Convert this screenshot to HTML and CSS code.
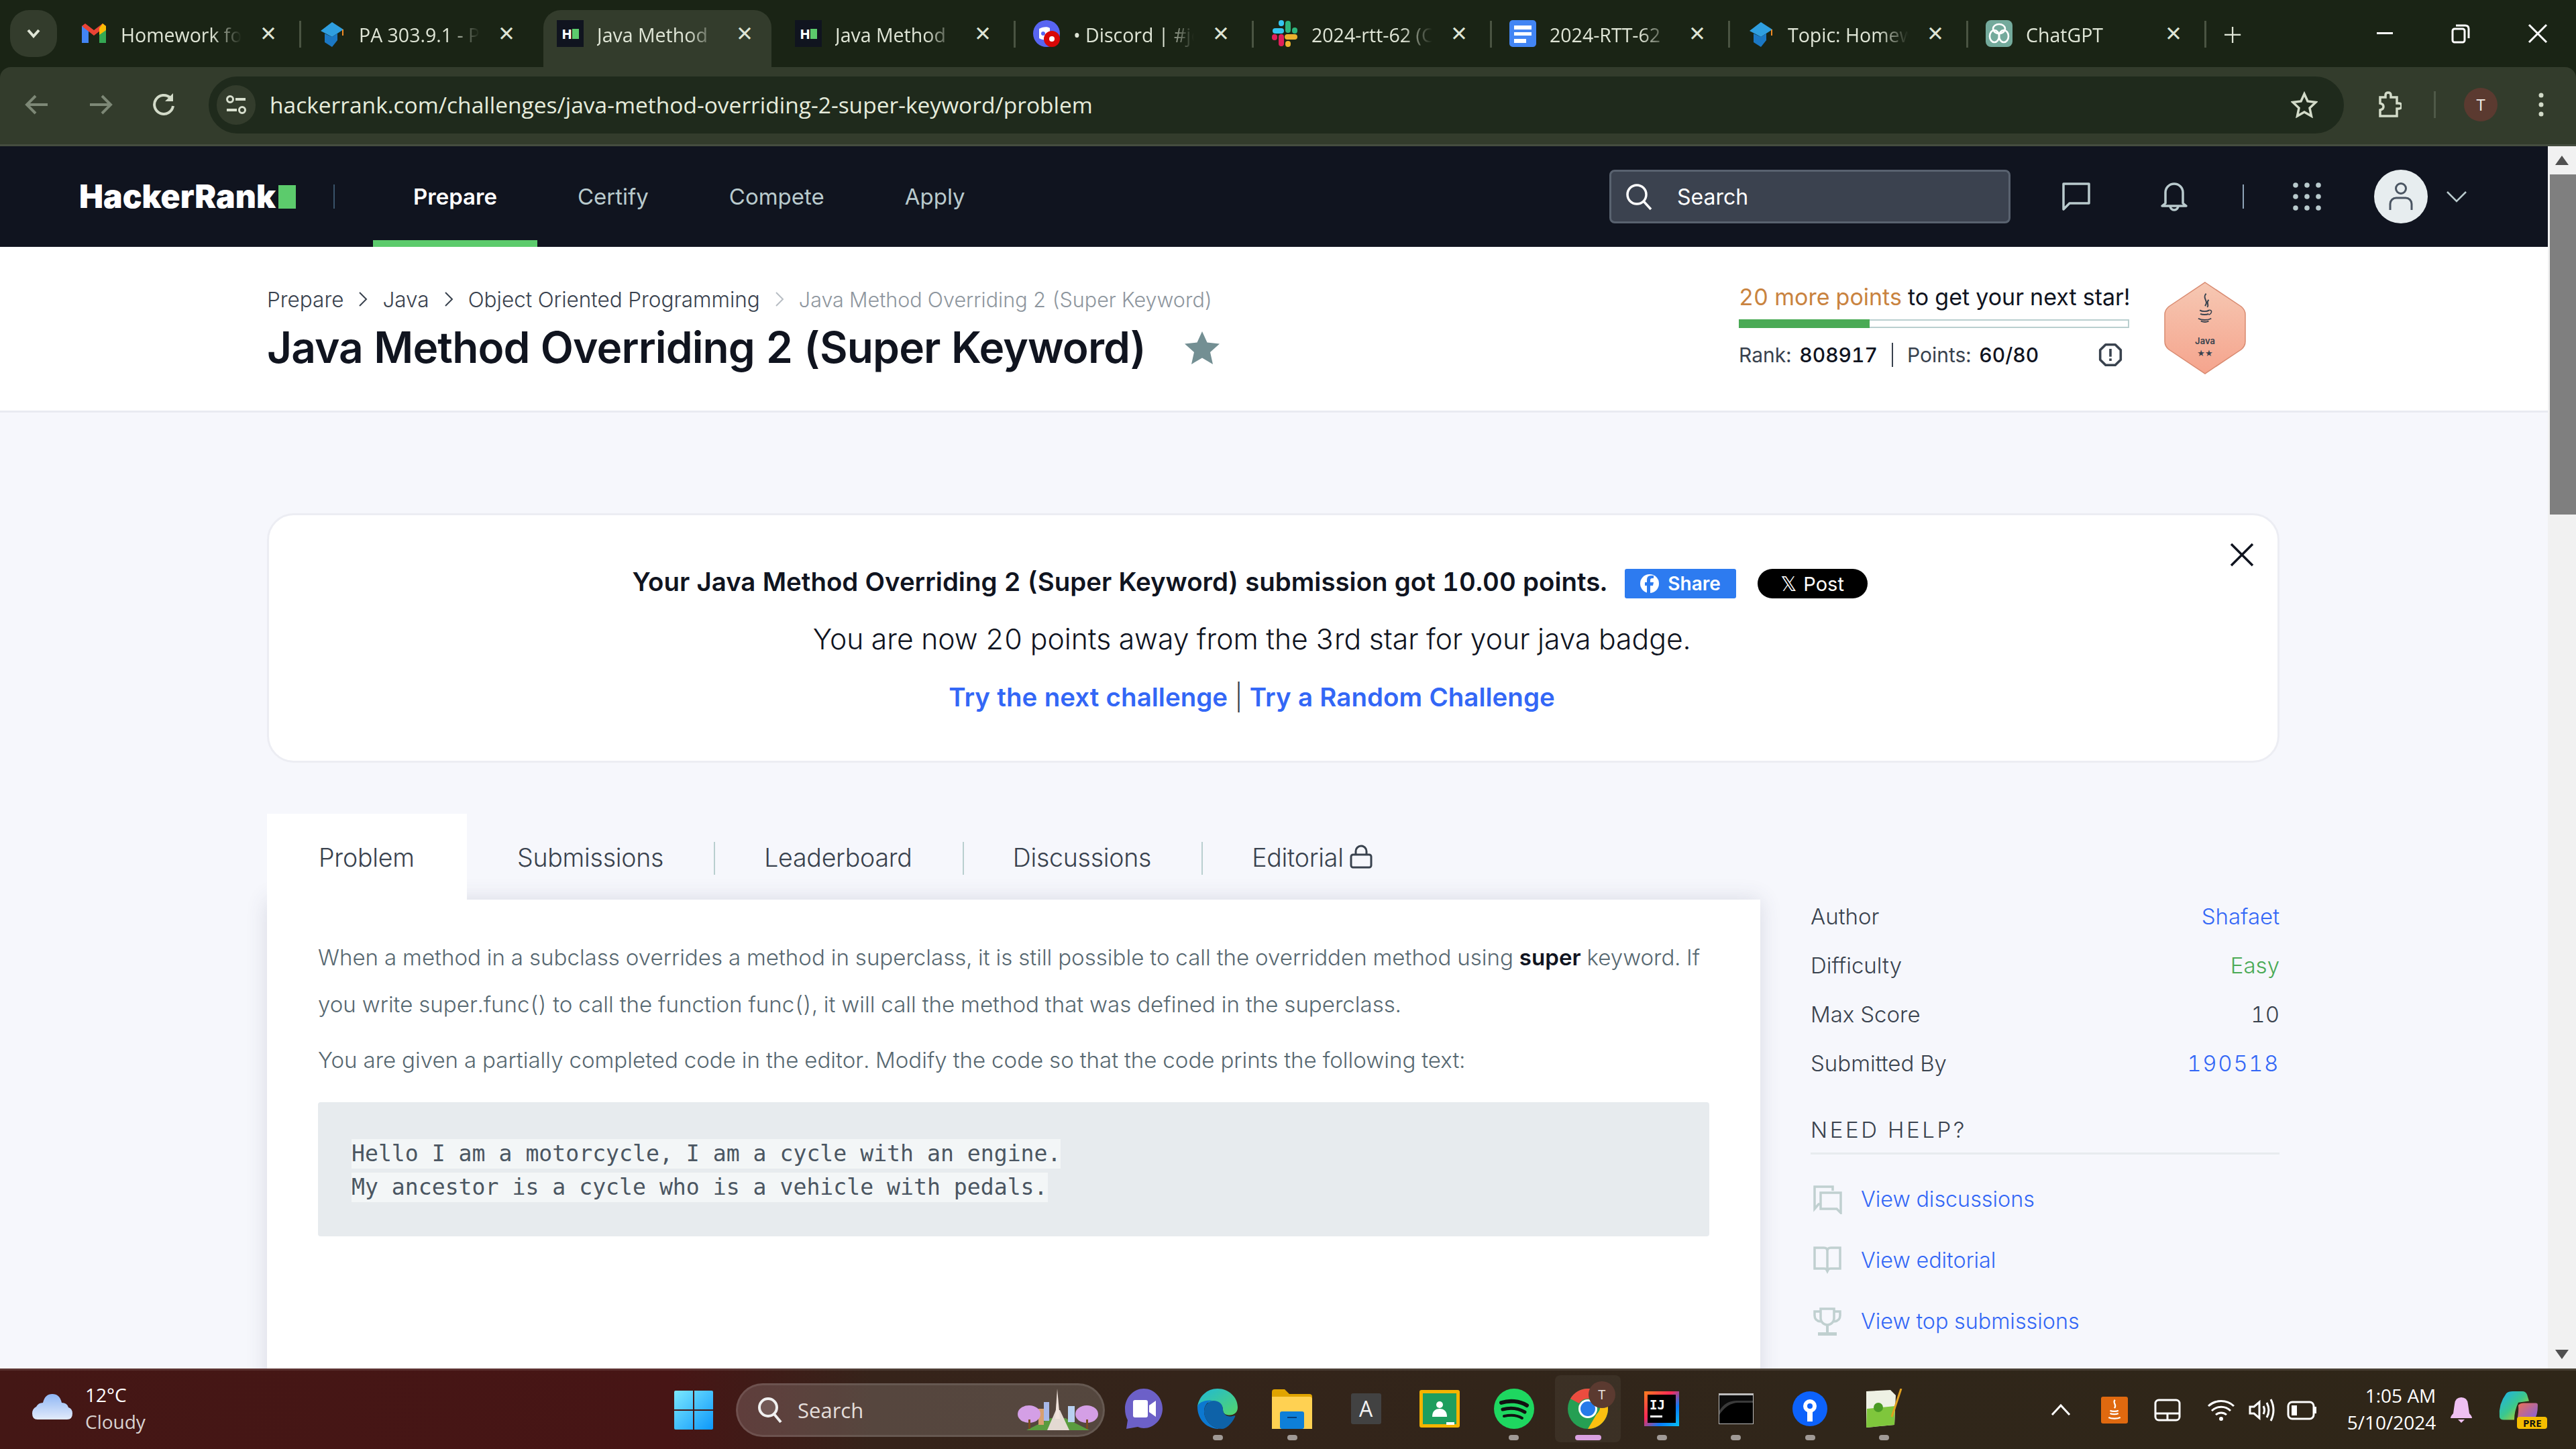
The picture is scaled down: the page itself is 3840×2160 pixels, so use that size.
FILE: index.html
```html
<!DOCTYPE html>
<html lang="en">
<head>
<meta charset="utf-8">
<title>Java Method Overriding 2 (Super Keyword) | HackerRank</title>
<link rel="stylesheet" href="styles.css">
</head>
<body>
<div class="tabstrip">
  <div class="tab-list-btn"><svg width="24" height="16" viewBox="0 0 24 16"><path d="M4 3l8 9 8-9" fill="none" stroke="#dfe5d6" stroke-width="4"/></svg></div>
  <div class="tab">
    <svg class="fav" viewBox="0 0 40 40"><path d="M2 34V9l5-3 5 6v22z" fill="#4285f4"/><path d="M28 34V12l5-6 5 3v25z" fill="#34a853"/><path d="M2 9l18 14L38 9l-5-4-13 10L7 5z" fill="#ea4335"/><path d="M33 5l5 4v6l-10 7v-10z" fill="#fbbc04"/></svg>
    <span class="tab-title">Homework fo</span><span class="tab-x">✕</span>
  </div>
  <div class="tab">
    <svg class="fav" viewBox="0 0 40 40"><path d="M3 16L20 3l17 11-17 11z" fill="#2f9fe0"/><path d="M9 20v13l11 7 8-10V20l-8 5z" fill="#1b78c4"/><path d="M35 14l2 0v9h-2z" fill="#f08a24"/></svg>
    <span class="tab-title">PA 303.9.1 - P</span><span class="tab-x">✕</span>
  </div>
  <div class="tab active">
    <svg class="fav" viewBox="0 0 40 40"><rect width="40" height="40" fill="#10141f"/><rect x="23" y="13" width="10" height="15" fill="#5ccb6c"/><text x="15" y="27.500" text-anchor="middle" class="fav-h">H</text></svg>
    <span class="tab-title">Java Method</span><span class="tab-x">✕</span>
  </div>
  <div class="tab">
    <svg class="fav" viewBox="0 0 40 40"><rect width="40" height="40" fill="#10141f"/><rect x="23" y="13" width="10" height="15" fill="#5ccb6c"/><text x="15" y="27.500" text-anchor="middle" class="fav-h">H</text></svg>
    <span class="tab-title">Java Method</span><span class="tab-x">✕</span>
  </div>
  <div class="tab">
    <svg class="fav" viewBox="0 0 40 40"><circle cx="20" cy="20" r="20" fill="#5865f2"/><path d="M9 13c4-3 13-4 16-1v16c-4 2-12 2-16-1z" fill="#fff"/><circle cx="15" cy="20" r="3" fill="#5865f2"/><circle cx="28" cy="28" r="12" fill="#d80707"/><circle cx="28" cy="28" r="4" fill="#fff"/></svg>
    <span class="tab-title">• Discord | #jo</span><span class="tab-x">✕</span>
  </div>
  <div class="tab">
    <svg class="fav" viewBox="0 0 40 40"><g fill="none" stroke-width="8" stroke-linecap="round"><path d="M6 16h9" stroke="#36c5f0"/><path d="M25 5v10" stroke="#2eb67d"/><path d="M24 25h11" stroke="#ecb22e"/><path d="M15 25v10" stroke="#e01e5a"/></g><rect x="11" y="0" width="8" height="9" rx="4" fill="#36c5f0"/><rect x="31" y="11" width="8" height="9" rx="4" fill="#2eb67d"/><rect x="21" y="31" width="8" height="9" rx="4" fill="#ecb22e"/><rect x="1" y="21" width="8" height="9" rx="4" fill="#e01e5a"/></svg>
    <span class="tab-title">2024-rtt-62 (C</span><span class="tab-x">✕</span>
  </div>
  <div class="tab">
    <svg class="fav" viewBox="0 0 40 40"><rect width="40" height="40" rx="5" fill="#4285f4"/><rect x="7" y="8" width="26" height="6" fill="#fff"/><rect x="7" y="18" width="26" height="5" fill="#fff"/><rect x="7" y="28" width="18" height="6" fill="#fff"/></svg>
    <span class="tab-title">2024-RTT-62</span><span class="tab-x">✕</span>
  </div>
  <div class="tab">
    <svg class="fav" viewBox="0 0 40 40"><path d="M3 16L20 3l17 11-17 11z" fill="#2f9fe0"/><path d="M9 20v13l11 7 8-10V20l-8 5z" fill="#1b78c4"/><path d="M35 14l2 0v9h-2z" fill="#f08a24"/></svg>
    <span class="tab-title">Topic: Homew</span><span class="tab-x">✕</span>
  </div>
  <div class="tab">
    <svg class="fav" viewBox="0 0 40 40"><rect width="40" height="40" rx="8" fill="#74aa9c"/><g fill="none" stroke="#fff" stroke-width="2.600"><ellipse cx="20" cy="13" rx="9" ry="7"/><ellipse cx="13" cy="24" rx="7" ry="9"/><ellipse cx="27" cy="24" rx="7" ry="9"/></g></svg>
    <span class="tab-title">ChatGPT</span><span class="tab-x">✕</span>
  </div>
  <div class="new-tab">+</div>
  <div class="win-controls">
    <svg class="win-ctl" viewBox="0 0 40 40"><rect x="8" y="18" width="24" height="3" fill="#fff"/></svg>
    <svg class="win-ctl" viewBox="0 0 40 40"><rect x="9" y="13" width="18" height="20" rx="3" fill="none" stroke="#fff" stroke-width="3"/><path d="M14 8h14q5 0 5 5v14" fill="none" stroke="#fff" stroke-width="3"/></svg>
    <svg class="win-ctl" viewBox="0 0 40 40"><path d="M7 7l26 26M33 7L7 33" stroke="#fff" stroke-width="3"/></svg>
  </div>
</div>

<div class="toolbar">
  <svg class="tb-nav" viewBox="0 0 40 40"><path d="M36 20H6M18 7L5 20l13 13" fill="none" stroke="#7d8876" stroke-width="4"/></svg>
  <svg class="tb-nav" viewBox="0 0 40 40"><path d="M4 20h30M22 7l13 13-13 13" fill="none" stroke="#7d8876" stroke-width="4"/></svg>
  <svg class="tb-nav" viewBox="0 0 40 40"><path d="M33 22a14 14 0 1 1-4-12" fill="none" stroke="#d3dbc9" stroke-width="4"/><path d="M33 3v12H21z" fill="#d3dbc9"/></svg>
  <div class="omnibox">
    <div class="site-info"><svg width="32" height="32" viewBox="0 0 32 32"><circle cx="7" cy="8" r="4.500" fill="none" stroke="#d8dfce" stroke-width="3"/><rect x="15" y="6" width="15" height="4" fill="#d8dfce"/><circle cx="25" cy="24" r="4.500" fill="none" stroke="#d8dfce" stroke-width="3"/><rect x="2" y="22" width="15" height="4" fill="#d8dfce"/></svg></div>
    <span class="url">hackerrank.com/challenges/java-method-overriding-2-super-keyword/problem</span>
    <svg class="omni-star" viewBox="0 0 40 40"><path d="M20 4l5 11 12 1.500-9 8.500 2.500 12L20 31 9.500 37 12 25l-9-8.500L15 15z" fill="none" stroke="#d3dbc9" stroke-width="3.500"/></svg>
  </div>
  <svg class="tb-ext" viewBox="0 0 40 40"><path d="M8 9h8V6q0-4 4-4t4 4v3h9v9h3q4 0 4 4t-4 4h-3v11H8v-9q5-1 5-5t-5-5z" fill="none" stroke="#d3dbc9" stroke-width="3.500"/></svg>
  <div class="tb-div"></div>
  <div class="tb-avatar">T</div>
  <svg class="tb-dots" viewBox="0 0 12 40"><circle cx="6" cy="6" r="3.500" fill="#d3dbc9"/><circle cx="6" cy="20" r="3.500" fill="#d3dbc9"/><circle cx="6" cy="34" r="3.500" fill="#d3dbc9"/></svg>
</div>

<div class="viewport">
  <div class="page">
    <nav class="nav">
      <div class="logo"><span class="logo-text">HackerRank</span><span class="logo-block"></span></div>
      <div class="nav-sep"></div>
      <div class="nav-link current">Prepare</div>
      <div class="nav-link">Certify</div>
      <div class="nav-link">Compete</div>
      <div class="nav-link">Apply</div>
      <div class="nav-right">
        <div class="nav-search">
          <svg width="44" height="44" viewBox="0 0 44 44"><circle cx="19" cy="19" r="14" fill="none" stroke="#fff" stroke-width="3.500"/><path d="M29 29l11 12" stroke="#fff" stroke-width="3.500"/></svg>
          <span>Search</span>
        </div>
        <svg class="nav-ico chat" viewBox="0 0 44 44"><path d="M3 3h38v29H12L3 41z" fill="none" stroke="#b9cacd" stroke-width="3.500" stroke-linejoin="round"/></svg>
        <svg class="nav-ico bell" viewBox="0 0 44 44"><path d="M9 32V16a13 13 0 0 1 26 0v16l5 4H4z" fill="none" stroke="#b9cacd" stroke-width="3.500" stroke-linejoin="round"/><path d="M16 36a6 6 0 0 0 12 0" fill="none" stroke="#b9cacd" stroke-width="3.500"/></svg>
        <div class="nav-sep2"></div>
        <svg class="nav-ico grid" viewBox="0 0 44 44"><g fill="#b9cacd"><circle cx="5" cy="5" r="3.800"/><circle cx="22" cy="5" r="3.800"/><circle cx="39" cy="5" r="3.800"/><circle cx="5" cy="22" r="3.800"/><circle cx="22" cy="22" r="3.800"/><circle cx="39" cy="22" r="3.800"/><circle cx="5" cy="39" r="3.800"/><circle cx="22" cy="39" r="3.800"/><circle cx="39" cy="39" r="3.800"/></g></svg>
        <div class="nav-avatar"><svg width="40" height="44" viewBox="0 0 40 44"><circle cx="20" cy="10" r="7.500" fill="none" stroke="#4a5562" stroke-width="3"/><path d="M4 42V33a9 9 0 0 1 9-9h14a9 9 0 0 1 9 9v9" fill="none" stroke="#4a5562" stroke-width="3"/></svg></div>
        <svg class="nav-chev" viewBox="0 0 32 20"><path d="M2 3l14 14L30 3" fill="none" stroke="#b9cacd" stroke-width="2.500"/></svg>
      </div>
    </nav>

    <header class="head">
      <div class="head-left">
        <div class="crumbs">
          <span>Prepare</span><svg class="crumb-sep" viewBox="0 0 14 24"><path d="M2 2l10 10L2 22" fill="none" stroke="#39424e" stroke-width="2"/></svg>
          <span>Java</span><svg class="crumb-sep" viewBox="0 0 14 24"><path d="M2 2l10 10L2 22" fill="none" stroke="#39424e" stroke-width="2"/></svg>
          <span>Object Oriented Programming</span><svg class="crumb-sep" viewBox="0 0 14 24"><path d="M2 2l10 10L2 22" fill="none" stroke="#b8bec4" stroke-width="2"/></svg>
          <span class="crumb-last">Java Method Overriding 2 (Super Keyword)</span>
        </div>
        <div class="title-row">
          <h1>Java Method Overriding 2 (Super Keyword)</h1>
          <svg class="title-star" viewBox="0 0 52 50"><path d="M26 1l7.500 16.500L52 19.500 38 32l4 18-16-9.500L10 50l4-18L0 19.500l18.500-2z" fill="#738f93"/></svg>
        </div>
      </div>
      <div class="head-score">
        <div class="score">
          <div class="score-msg"><span class="orange">20 more points</span> to get your next star!</div>
          <div class="progress"><div class="progress-fill"></div></div>
          <div class="rank-row">
            <span>Rank:</span><b>808917</b><span class="rank-sep"></span><span>Points:</span><b>60/80</b>
            <svg class="rank-info" viewBox="0 0 40 40"><path d="M12 3h16l9 9v16l-9 9H12l-9-9V12z" fill="none" stroke="#39424e" stroke-width="4" stroke-linejoin="round"/><rect x="18" y="10" width="4" height="13" fill="#39424e"/><rect x="18" y="26" width="4" height="4" fill="#39424e"/></svg>
          </div>
        </div>
        <div class="badge">
          <svg class="badge-shape" viewBox="0 0 122 138"><defs><linearGradient id="bg" x1="0" y1="0" x2="0" y2="1"><stop offset="0" stop-color="#f6c8b3"/><stop offset="1" stop-color="#f5a48d"/></linearGradient></defs><path d="M61 1l54 36q6 5 6 12v40q0 7-6 12l-54 36-54-36q-6-5-6-12V49q0-7 6-12z" fill="url(#bg)" stroke="#d88a70" stroke-width="1.500"/></svg>
          <svg class="badge-cup" viewBox="0 0 30 80"><g fill="none" stroke="#39424e" stroke-width="2.500"><path d="M17 2c-8 10 6 14-2 24M22 14c-6 6 2 10-3 14"/><path d="M5 34c4 3 14 3 18 0M6 41c4 2 12 2 16 0"/><path d="M2 50c6 4 18 4 25 0"/><path d="M7 55c5 2 11 2 15 0"/></g><path d="M23 34c6-1 6 6-1 9" fill="none" stroke="#39424e" stroke-width="2"/></svg>
          <span class="badge-name">Java</span>
          <span class="badge-stars">★★</span>
        </div>
      </div>
    </header>

    <main class="main">
      <section class="banner">
        <svg class="banner-x" viewBox="0 0 36 36"><path d="M2 2l32 32M34 2L2 34" stroke="#10141f" stroke-width="3.500"/></svg>
        <div class="banner-1">
          <span>Your Java Method Overriding 2 (Super Keyword) submission got 10.00 points.</span>
          <span class="fb"><svg width="30" height="30" viewBox="0 0 30 30"><circle cx="15" cy="15" r="14" fill="#fff"/><path d="M16 29V18h4l1-5h-5v-3q0-3 3-3h2V3h-4q-6 0-6 6v4H8v5h3v11z" fill="#2d7bf0"/></svg>Share</span>
          <span class="xpost"><span class="xlogo">𝕏</span>Post</span>
        </div>
        <div class="banner-2">You are now 20 points away from the 3rd star for your java badge.</div>
        <div class="banner-3"><a>Try the next challenge</a><span class="bar"> | </span><a>Try a Random Challenge</a></div>
      </section>

      <div class="content">
        <div class="left">
          <div class="tabs">
            <div class="ptab on">Problem</div>
            <div class="ptab">Submissions</div>
            <div class="ptab sep">Leaderboard</div>
            <div class="ptab sep">Discussions</div>
            <div class="ptab sep">Editorial <svg class="lock" viewBox="0 0 34 36"><rect x="2" y="15" width="30" height="19" rx="3" fill="none" stroke="#39424e" stroke-width="3"/><path d="M9 15V10a8 8 0 0 1 16 0v5" fill="none" stroke="#39424e" stroke-width="3"/></svg></div>
          </div>
          <article class="card">
            <p class="para first">When a method in a subclass overrides a method in superclass, it is still possible to call the overridden method using <b>super</b> keyword. If you write super.func() to call the function func(), it will call the method that was defined in the superclass.</p>
            <p class="para">You are given a partially completed code in the editor. Modify the code so that the code prints the following text:</p>
            <div class="pre">
              <code>Hello I am a motorcycle, I am a cycle with an engine.</code>
              <code>My ancestor is a cycle who is a vehicle with pedals.</code>
            </div>
          </article>
        </div>
        <aside class="side">
          <div class="side-row"><span>Author</span><span class="blue">Shafaet</span></div>
          <div class="side-row"><span>Difficulty</span><span class="green">Easy</span></div>
          <div class="side-row"><span>Max Score</span><span>10</span></div>
          <div class="side-row"><span>Submitted By</span><span class="blue num">190518</span></div>
          <div class="help">NEED HELP?</div>
          <div class="help-link"><svg viewBox="0 0 44 44"><path d="M30 9V3H3v33l6-7h4" fill="none" stroke="#c0d0d0" stroke-width="3.500"/><path d="M12 12h30v30l-6-6H12z" fill="none" stroke="#c0d0d0" stroke-width="3.500"/></svg><span>View discussions</span></div>
          <div class="help-link"><svg viewBox="0 0 44 44"><path d="M3 3h14q5 0 5 5v30q0-4-5-4H3zM41 3H27q-5 0-5 5v30q0-4 5-4h14z" fill="none" stroke="#c0d0d0" stroke-width="3.500"/><path d="M18 34l4 8 4-8" fill="#c0d0d0"/></svg><span>View editorial</span></div>
          <div class="help-link"><svg viewBox="0 0 44 44"><path d="M12 3h20v14a10 10 0 0 1-20 0z" fill="none" stroke="#c0d0d0" stroke-width="3.500"/><path d="M12 7H3v6q0 8 9 9M32 7h9v6q0 8-9 9" fill="none" stroke="#c0d0d0" stroke-width="3.500"/><rect x="20" y="27" width="4" height="11" fill="#c0d0d0"/><rect x="8" y="38" width="28" height="5" fill="#c0d0d0"/></svg><span>View top submissions</span></div>
        </aside>
      </div>
    </main>
  </div>
  <div class="scrollbar">
    <div class="sb-arrow"><svg width="20" height="14" viewBox="0 0 20 14"><path d="M10 0l10 14H0z" fill="#505050"/></svg></div>
    <div class="sb-thumb"></div>
    <div class="sb-track"></div>
    <div class="sb-arrow low"><svg width="20" height="14" viewBox="0 0 20 14"><path d="M10 14L0 0h20z" fill="#505050"/></svg></div>
  </div>
</div>

<footer class="taskbar">
  <div class="weather">
    <svg class="cloud" viewBox="0 0 60 38"><defs><linearGradient id="cl" x1="0" y1="0" x2="0" y2="1"><stop offset="0" stop-color="#8fb6f4"/><stop offset="1" stop-color="#e2ebfb"/></linearGradient></defs><path d="M8 38q-8 0-8-9 0-7 6-10 3-6 10-6 3-13 14-13t14 13q8 0 10 7 6 2 6 9 0 9-8 9z" fill="url(#cl)"/></svg>
    <div class="weather-text"><div>12°C</div><div class="dim">Cloudy</div></div>
  </div>
  <svg class="winlogo" viewBox="0 0 58 58"><defs><linearGradient id="win" x1="0" y1="0" x2="1" y2="1"><stop offset="0" stop-color="#7be8ff"/><stop offset="1" stop-color="#0d98fa"/></linearGradient></defs><path d="M0 2q0-2 2-2h26v28H0zM30 0h26q2 0 2 2v26H30zM0 30h28v28H2q-2 0-2-2zM30 30h28v26q0 2-2 2H30z" fill="url(#win)"/></svg>
  <div class="tb-search">
    <svg width="40" height="42" viewBox="0 0 40 42"><circle cx="17" cy="17" r="13" fill="#ffffff22" stroke="#f0f0f0" stroke-width="4"/><path d="M26 27l10 12" stroke="#f0f0f0" stroke-width="4"/></svg>
    <span>Search</span>
    <svg class="tb-scene" viewBox="0 0 122 64"><path d="M14 62l36-18h22l36 18z" fill="#5a9b3f"/><path d="M45 62l13-30h6l14 30z" fill="#e3d9d2"/><rect x="40" y="20" width="8" height="28" fill="#a8b8e8"/><rect x="76" y="26" width="10" height="24" fill="#b8d0f0"/><rect x="32" y="30" width="8" height="24" fill="#d8a070"/><path d="M57 45L60 0l4 45z" fill="#f1e4dc"/><ellipse cx="18" cy="38" rx="17" ry="13" fill="#d49fe6"/><ellipse cx="104" cy="38" rx="17" ry="13" fill="#d49fe6"/><rect x="17" y="46" width="3" height="14" fill="#7a4b20"/><rect x="103" y="46" width="3" height="14" fill="#7a4b20"/></svg>
  </div>
  <div class="apps">
    <div class="app"><svg viewBox="0 0 56 60"><path d="M28 0c15 0 28 13 28 30 0 16-13 29-28 29-3 0-6-1-9-2l-17 3 2-13Q0 40 0 30C0 13 13 0 28 0z" fill="#6c60c8"/><rect x="12" y="17" width="22" height="26" rx="3" fill="#fff"/><path d="M36 25l10-7v24l-10-7z" fill="#fff"/></svg></div>
    <div class="app dot"><svg viewBox="0 0 60 60"><defs><linearGradient id="ed" x1="0" y1="0" x2="1" y2="1"><stop offset="0" stop-color="#1fb8d8"/><stop offset="1" stop-color="#54d66a"/></linearGradient></defs><path d="M30 0c17 0 30 13 30 28 0 9-8 13-16 11-5-1-6-5-6-8 0-6-6-11-14-11C10 20 1 27 0 27 2 12 14 0 30 0z" fill="url(#ed)"/><path d="M0 27c1-6 12-11 22-9-9 2-12 9-12 16 0 13 12 26 27 26C15 62 0 47 0 27z" fill="#0c78d0"/><path d="M10 34c0-10 8-16 14-16 8 0 14 5 14 13 0 8 8 12 14 10 4-1 5-1 4 1-5 11-14 18-19 18-15 0-27-13-27-26z" fill="#0e62a8"/></svg></div>
    <div class="app dot"><svg viewBox="0 0 60 60"><path d="M0 5q0-4 4-4h15l7 7h30q4 0 4 4v44q0 4-4 4H4q-4 0-4-4z" fill="#e0a400"/><path d="M0 12h56q4 0 4 4v44H0z" fill="#ffd152"/><rect x="12" y="34" width="36" height="26" rx="3" fill="#0e7fd8"/><rect x="23" y="42" width="14" height="2" fill="#063e7a"/></svg></div>
    <div class="app"><div class="app-a">A</div></div>
    <div class="app"><svg viewBox="0 0 60 60"><rect y="2" width="60" height="56" rx="3" fill="#f4b400"/><rect x="5" y="7" width="50" height="46" fill="#1e9e5e"/><circle cx="30" cy="24" r="5" fill="#fff"/><path d="M19 42c0-9 5-12 11-12s11 3 11 12z" fill="#fff"/><rect x="40" y="50" width="12" height="4" fill="#fff"/></svg></div>
    <div class="app dot"><svg viewBox="0 0 60 60"><circle cx="30" cy="30" r="30" fill="#1ed760"/><g fill="none" stroke="#111" stroke-linecap="round"><path d="M11 21c12-4 27-3 38 4" stroke-width="6"/><path d="M13 31c11-3 23-2 33 4" stroke-width="5"/><path d="M15 41c9-2 19-2 27 3" stroke-width="4"/></g></svg></div>
    <div class="app on"><svg viewBox="0 0 60 60"><circle cx="30" cy="30" r="30" fill="#1a9a4a"/><path d="M30 0a30 30 0 0 1 26 15H30a15 15 0 0 0-13 7L4 15A30 30 0 0 1 30 0z" fill="#ea4335"/><path d="M56 15a30 30 0 0 1-26 45l13-22a15 15 0 0 0 0-23z" fill="#fbbc04"/><circle cx="30" cy="30" r="14" fill="#fff"/><circle cx="30" cy="30" r="11" fill="#1a73e8"/></svg><span class="app-t">T</span></div>
    <div class="app dot"><svg class="s52" viewBox="0 0 52 52"><defs><linearGradient id="ij" x1="0" y1="0" x2="1" y2="1"><stop offset="0" stop-color="#fc801d"/><stop offset=".4" stop-color="#fe2857"/><stop offset=".7" stop-color="#087cfa"/><stop offset="1" stop-color="#07c3f2"/></linearGradient></defs><rect width="52" height="52" fill="url(#ij)"/><rect x="5" y="5" width="42" height="42" fill="#000"/><text x="8" y="27" class="ij">IJ</text><rect x="9" y="36" width="18" height="3" fill="#fff"/></svg></div>
    <div class="app dot"><svg class="s52" viewBox="0 0 52 46"><rect width="52" height="46" fill="#bdbdbd"/><rect x="1" y="3" width="50" height="42" fill="#0b0b0b"/><path d="M1 45V32q12-18 28-18h22v31z" fill="#000"/><path d="M1 32q12-18 28-18h22v-3H27Q10 11 1 26z" fill="#3a3a3a"/></svg></div>
    <div class="app dot"><svg class="s52" viewBox="0 0 52 52"><circle cx="26" cy="26" r="26" fill="#0c62fb"/><circle cx="26" cy="22" r="10" fill="#fff"/><circle cx="26" cy="22" r="4" fill="#0c62fb"/><rect x="22" y="26" width="8" height="19" fill="#fff"/></svg></div>
    <div class="app dot"><svg viewBox="0 0 56 60"><path d="M2 4l36-2 8 8-2 44-42 4z" fill="#eef1e4"/><path d="M3 30l42-4-1 28-42 4z" fill="#7fc63c"/><circle cx="20" cy="28" r="7" fill="#4a9a24"/><path d="M54 0L40 42" stroke="#e0a020" stroke-width="3"/></svg></div>
  </div>
  <div class="tray">
    <svg class="t80" viewBox="0 0 80 40"><path d="M27 27l13-14 13 14" fill="none" stroke="#fff" stroke-width="3"/></svg>
    <div class="t80"><div class="java-tile"><svg width="24" height="32" viewBox="0 0 28 44"><g fill="none" stroke="#fff" stroke-width="3"><path d="M15 1c-6 7 5 9-1 17"/><path d="M5 23c4 2 13 2 17 0M5 29c4 2 13 2 17 0"/><path d="M2 37c6 3 18 3 24 0"/></g></svg></div></div>
    <svg class="t78" viewBox="0 0 78 40"><rect x="21" y="5" width="36" height="30" rx="5" fill="none" stroke="#fff" stroke-width="3"/><path d="M21 25h36M39 25v10" stroke="#fff" stroke-width="3"/></svg>
    <svg class="t82" viewBox="0 0 82 40"><g fill="none" stroke="#fff" stroke-width="3"><path d="M22 14a28 28 0 0 1 38 0"/><path d="M27 21a20 20 0 0 1 28 0"/><path d="M33 27a12 12 0 0 1 16 0"/></g><circle cx="41" cy="33" r="3" fill="#fff"/></svg>
    <svg class="t40" viewBox="0 0 40 40"><g fill="none" stroke="#fff" stroke-width="3"><path d="M2 15h6l8-7v24l-8-7H2z"/><path d="M22 14q3 6 0 12M27 9q6 11 0 22M33 4q8 16 0 32"/></g></svg>
    <svg class="t80" viewBox="0 0 80 40"><rect x="19" y="8" width="38" height="25" rx="6" fill="none" stroke="#fff" stroke-width="3"/><rect x="24" y="13" width="8" height="15" fill="#fff"/><rect x="58" y="15" width="3" height="10" fill="#fff"/></svg>
    <div class="clock"><div>1:05 AM</div><div>5/10/2024</div></div>
    <svg class="t76" viewBox="0 0 76 40"><path d="M38 1q9 0 10 10l2 14q4 4 4 7H22q0-3 4-7l2-14q1-10 10-10z" fill="#efc0f2"/><path d="M33 34h10l-5 5z" fill="#efc0f2"/></svg>
    <div class="t94 copilot">
      <svg width="60" height="56" viewBox="0 0 60 70" preserveAspectRatio="none"><defs><linearGradient id="cp" x1="0" y1="0" x2="1" y2="1"><stop offset="0" stop-color="#1ab0f0"/><stop offset=".5" stop-color="#3cc88c"/><stop offset="1" stop-color="#f4d400"/></linearGradient><linearGradient id="cp2" x1="0" y1="0" x2="1" y2="1"><stop offset="0" stop-color="#f07050"/><stop offset="1" stop-color="#7a60e8"/></linearGradient></defs><path d="M2 48Q0 24 12 4q3-4 10-4h14q5 0 7 6l3 12-16 3q-6 16-6 32H8q-5 0-6-5z" fill="url(#cp)"/><path d="M30 26q3-4 8-4h18q3 0 3 4 0 20-6 28H28q3-16 2-28z" fill="url(#cp2)"/></svg>
      <span class="pre-tag">PRE</span>
    </div>
  </div>
</footer>
</body>
</html>
```

FILE: styles.css
```css
* { box-sizing: border-box; }
html, body { margin: 0; padding: 0; }
body {
  width: 3840px; height: 2160px; overflow: hidden;
  display: flex; flex-direction: column;
  font-family: "Inter", "Liberation Sans", sans-serif;
  font-variant-numeric: tabular-nums;
  background: #1a2415;
}

/* browser chrome */
.tabstrip { height: 100px; display: flex; align-items: flex-start; padding: 15px 0 0 15px; background: #1a2415; flex: none; }
.tab-list-btn { width: 70px; height: 70px; margin-right: 15px; border-radius: 28px; background: #333c2c; display: flex; align-items: center; justify-content: center; }
.tab { width: 355px; height: 85px; position: relative; display: flex; align-items: flex-start; padding: 15px 0 0 20px; flex: none; }
.tab::after { content: ""; position: absolute; right: 6px; top: 16px; width: 3px; height: 40px; background: #4a5442; }
.tab.active::before { content: ""; position: absolute; left: 0; top: 0; width: 340px; height: 85px; background: #333c2c; border-radius: 26px 26px 0 0; }
.tab.active::after, .tab:nth-child(3)::after { display: none; }
.fav { width: 40px; height: 40px; position: relative; flex: none; }
.fav-h { font: 800 19px "Inter", sans-serif; fill: #fff; }
.tab-title {
  position: relative; width: 180px; margin-left: 20px; white-space: nowrap;
  font: 400 28.500px/44px "Open Sans", sans-serif; color: #dfe5d6;
  -webkit-mask-image: linear-gradient(90deg, #000 75%, transparent 100%);
  mask-image: linear-gradient(90deg, #000 75%, transparent 100%);
}
.tab-x { position: relative; width: 40px; margin-left: 20px; text-align: center; font: 400 31px/40px "DejaVu Sans", sans-serif; color: #dfe5d6; }
.new-tab { width: 70px; margin-left: -2px; text-align: center; font: 300 52px/70px "Open Sans", sans-serif; color: #dfe5d6; }
.win-controls { margin-left: auto; display: flex; gap: 72px; padding: 15px 37px 0 0; }
.win-ctl { width: 40px; height: 40px; }
.win-ctl:last-child { margin-left: 4px; }

.toolbar { height: 118px; flex: none; background: #333c2c; border-bottom: 3px solid #454d3f; border-radius: 16px 16px 0 0; display: flex; align-items: center; padding: 0 35px 3px 35px; }
.tb-nav { width: 40px; height: 40px; margin-right: 55px; flex: none; }
.omnibox { width: 3183px; height: 85px; margin-left: -9px; background: #1f2a1c; border-radius: 43px; display: flex; align-items: center; padding-left: 12px; flex: none; }
.site-info { width: 58px; height: 59px; border-radius: 30px; background: #333c2c; display: flex; align-items: center; justify-content: center; flex: none; }
.url { margin-left: 21px; font: 400 33.500px/44px "Open Sans", sans-serif; color: #e6ecdc; white-space: nowrap; }
.omni-star { width: 40px; height: 40px; margin-left: auto; margin-right: 39px; }
.tb-ext { width: 40px; height: 40px; margin-left: 46px; flex: none; }
.tb-div { width: 3px; height: 40px; background: #4f5948; margin-left: 48px; flex: none; }
.tb-avatar { width: 50px; height: 50px; border-radius: 25px; background: #5b3a30; margin-left: 42px; color: #f2ece8; font: 400 24px/50px "Open Sans", sans-serif; text-align: center; flex: none; }
.tb-dots { width: 12px; height: 40px; margin-left: 59px; flex: none; }

.viewport { height: 1822px; display: flex; flex: none; background: #f6f7fc; overflow: hidden; }
.page { width: 3798px; flex: none; overflow: hidden; }

.scrollbar { width: 42px; flex: none; display: flex; flex-direction: column; background: #f1f1f1; }
.sb-arrow { height: 42px; display: flex; align-items: center; justify-content: center; background: #f1f1f1; flex: none; }
.sb-thumb { height: 507px; background: #7f7f7f; margin-left: 3px; flex: none; }
.sb-track { flex: 1; }

/* site nav */
.nav { height: 150px; background: #10141f; display: flex; align-items: center; padding-left: 118px; color: #b9cacd; }
.logo { display: flex; align-items: center; }
.logo-text { font: 900 48px/50px "Inter", sans-serif; color: #fff; width: 297px; white-space: nowrap; }
.logo-block { width: 26px; height: 35px; background: #5ccb6c; }
.nav-sep { width: 2px; height: 36px; background: #39536a; margin-left: 56px; }
.nav-link { height: 150px; line-height: 150px; padding: 0 60px; font-size: 33px; font-weight: 400; }
.nav-link:nth-child(3) { margin-left: 57px; }
.nav-link.current { color: #fff; font-weight: 600; border-bottom: 10px solid #5ccb6c; }
.nav-right { margin-left: auto; display: flex; align-items: center; padding-right: 120px; }
.nav-search { width: 598px; height: 80px; background: #3b424f; border: 3px solid #59626f; border-radius: 8px; display: flex; align-items: center; padding-left: 19px; color: #fff; font-size: 32px; }
.nav-search span { margin-left: 35px; }
.nav-ico { width: 44px; height: 44px; flex: none; }
.chat { margin-left: 76px; }
.bell { margin-left: 102px; }
.nav-sep2 { width: 2px; height: 36px; background: #8fa4b8; margin-left: 80px; }
.grid { margin-left: 72px; }
.nav-avatar { width: 80px; height: 80px; border-radius: 40px; background: #e7edef; margin-left: 78px; display: flex; align-items: center; justify-content: center; }
.nav-chev { width: 32px; height: 20px; margin-left: 27px; }

/* challenge head */
.head { height: 247px; background: #fff; border-bottom: 3px solid #e9ebf1; display: flex; justify-content: space-between; padding: 0 450px 0 398px; }
.crumbs { display: flex; align-items: center; height: 36px; margin-top: 60px; font-size: 31.500px; font-weight: 300; color: #39424e; white-space: nowrap; }
.crumb-sep { width: 14px; height: 24px; margin: 0 22px; }
.crumb-last { color: #8e969e; font-size: 30.500px; }
.title-row { display: flex; align-items: center; margin-top: 9px; }
h1 { margin: 0; font-size: 64px; line-height: 90px; font-weight: 600; letter-spacing: -.9px; color: #10141f; white-space: nowrap; }
.title-star { width: 52px; height: 50px; margin-left: 58px; }
.head-score { display: flex; align-items: flex-start; }
.score { width: 582px; padding-top: 52px; }
.score-msg { font-size: 34px; line-height: 46px; color: #10141f; white-space: nowrap; }
.orange { color: #c9833f; }
.progress { height: 13px; margin-top: 10px; border: 2px solid #b9cfcf; border-left: 0; }
.progress-fill { width: 195px; height: 13px; margin-top: -2px; background: #4aaa55; }
.rank-row { display: flex; align-items: center; margin-top: 18px; font-size: 30px; line-height: 44px; color: #39424e; font-weight: 400; position: relative; }
.rank-row b { font-weight: 500; margin-left: 12px; color: #10141f; }
.rank-sep { width: 2px; height: 36px; background: #39424e; margin: 0 21px; }
.rank-info { width: 36px; height: 38px; margin-left: auto; margin-right: 10px; }
.badge { width: 122px; height: 138px; margin: 52px 0 0 52px; position: relative; display: flex; flex-direction: column; align-items: center; padding-top: 16px; }
.badge-shape { position: absolute; left: 0; top: 0; width: 122px; height: 138px; }
.badge-cup { position: relative; width: 30px; height: 62px; }
.badge-name { position: relative; font-size: 13px; font-weight: 600; color: #39424e; margin-top: 2px; }
.badge-stars { position: relative; font: 13px "DejaVu Sans", sans-serif; color: #39424e; margin-top: 3px; }

/* body */
.main { width: 3000px; margin-left: 398px; padding-top: 150px; }
.banner { height: 372px; background: #fff; border: 3px solid #ecedf3; border-radius: 40px; position: relative; text-align: center; padding: 74px 64px 0 0; }
.banner-x { position: absolute; right: 35px; top: 41px; width: 36px; height: 36px; }
.banner-1 { display: flex; justify-content: center; align-items: center; gap: 26px; height: 50px; padding-right: 6px; font-size: 38.400px; font-weight: 600; color: #10141f; white-space: nowrap; }
.fb { width: 166px; height: 44px; margin-top: 6px; background: #2d7bf0; color: #fff; font-size: 28px; font-weight: 600; border-radius: 3px; display: flex; align-items: center; justify-content: center; gap: 12px; }
.xpost { width: 164px; height: 44px; margin: 6px 0 0 6px; background: #000; color: #fff; font-size: 29px; font-weight: 400; border-radius: 22px; display: flex; align-items: center; justify-content: center; gap: 10px; }
.xlogo { font-family: "DejaVu Sans", sans-serif; font-size: 30px; }
.banner-2 { margin-top: 36px; height: 50px; line-height: 50px; font-size: 42.700px; font-weight: 300; color: #10141f; }
.banner-3 { margin-top: 36px; height: 50px; line-height: 50px; font-size: 38.500px; font-weight: 600; color: #3367f6; }
.bar { font-weight: 300; color: #39424e; }

.content { display: flex; margin-top: 76px; }
.left { width: 2226px; flex: none; }
.tabs { height: 128px; display: flex; font-size: 37.500px; font-weight: 300; letter-spacing: -.25px; color: #39424e; }
.ptab { height: 128px; line-height: 132px; padding: 0 75px; white-space: nowrap; position: relative; }
.ptab.on { width: 298px; padding: 0 0 0 77px; background: #fff; z-index: 2; }
.ptab.sep::before { content: ""; position: absolute; left: 0; top: 42px; width: 2px; height: 49px; background: #b9cfcf; }
.lock { width: 34px; height: 36px; vertical-align: -3px; }
.card { background: #fff; height: 900px; padding: 51px 76px 0; box-shadow: 0 0 30px rgba(60, 70, 100, .16); position: relative; }
.para { margin: 0 0 16px; font-size: 33.100px; font-weight: 300; line-height: 70px; color: #576871; }
.para.first { margin-bottom: 13px; }
.para b { color: #10141f; font-weight: 600; }
.pre { margin-top: 28px; height: 200px; background: #e7ebee; border-radius: 4px; padding: 55px 50px 0; display: flex; flex-direction: column; align-items: flex-start; gap: 6px; }
.pre code { background: #f3f6f7; height: 44px; font: 400 33.150px/44px "DejaVu Sans Mono", monospace; color: #4b5662; white-space: pre; }

.side { width: 699px; margin-left: 75px; padding-top: 117px; font-size: 33px; font-weight: 300; color: #39424e; }
.side-row { display: flex; justify-content: space-between; height: 73px; line-height: 73px; }
.blue { color: #3367f6; }
.green { color: #4aaa55; }
.num { letter-spacing: 1.600px; }
.help { margin-top: 37px; padding-bottom: 9px; border-bottom: 3px solid #e7ebee; font-size: 33px; line-height: 50px; letter-spacing: 3.600px; font-weight: 300; }
.help-link { display: flex; align-items: center; height: 91px; color: #3367f6; font-size: 32.300px; }
.help + .help-link { margin-top: 21px; }
.help-link svg { width: 44px; height: 44px; margin: 0 28px 0 3px; flex: none; }

/* taskbar */
.taskbar { height: 120px; flex: none; display: flex; align-items: center; color: #fff; border-top: 3px solid rgba(255, 255, 255, .12);
  background: linear-gradient(90deg, #441715 0, #471515 1000px, #36231a 1300px, #30261a 2700px, #2f2618 100%); }
.weather { width: 957px; margin-left: 48px; display: flex; align-items: center; flex: none; }
.cloud { width: 60px; height: 38px; margin-top: -10px; }
.weather-text { margin: 0 0 6px 19px; font: 400 28px/40px "Open Sans", sans-serif; }
.dim { color: #d8d2d0; }
.winlogo { width: 58px; height: 58px; flex: none; }
.tb-search { width: 550px; height: 80px; margin-left: 34px; border-radius: 40px; background: rgba(255, 255, 255, .16); border: 3px solid rgba(255, 255, 255, .1); display: flex; align-items: center; padding-left: 28px; flex: none; position: relative; color: #e4dedb; font: 400 31px "Open Sans", sans-serif; }
.tb-search span { margin-left: 21px; }
.tb-scene { width: 122px; height: 64px; margin-left: auto; margin-right: 6px; }
.apps { display: flex; margin-left: 3px; flex: none; }
.app { width: 110.300px; height: 117px; position: relative; display: flex; align-items: center; justify-content: center; padding-bottom: 3px; }
.app svg { width: 60px; height: 60px; }
.app svg.s52 { width: 52px; height: 52px; }
.app.dot::after { content: ""; position: absolute; left: 48px; bottom: 13px; width: 15px; height: 8px; border-radius: 4px; background: #a09a96; }
.app.on::before { content: ""; position: absolute; left: 6px; top: 7px; width: 98px; height: 100px; background: rgba(255, 255, 255, .05); border-radius: 8px; }
.app.on::after { content: ""; position: absolute; left: 36px; bottom: 13px; width: 39px; height: 8px; border-radius: 4px; background: #d9a0e0; }
.app-t { position: absolute; left: 56px; top: 16px; width: 40px; height: 40px; border-radius: 20px; background: #5b3a30; text-align: center; font: 400 20px/40px "Open Sans", sans-serif; color: #ece6e2; }
.app-a { width: 45px; height: 46px; border-radius: 3px; background: #424242; text-align: center; font: 400 32px/46px "Open Sans", sans-serif; color: #f2f2f2; }
.ij { font: 700 19px "DejaVu Sans Mono", monospace; fill: #fff; }
.tray { display: flex; align-items: center; margin-left: 169px; flex: none; }
.t80 { width: 80px; height: 40px; display: flex; align-items: center; justify-content: center; }
.t78 { width: 78px; height: 40px; }
.t82 { width: 82px; height: 40px; }
.t40 { width: 40px; height: 40px; }
.t76 { width: 76px; height: 40px; }
.t94 { width: 94px; }
.java-tile { width: 40px; height: 40px; background: #e0690f; border-radius: 3px; display: flex; align-items: center; justify-content: center; flex: none; }
.clock { width: 159px; margin-bottom: 3px; text-align: right; font: 400 28px/40px "Open Sans", sans-serif; white-space: nowrap; }
.copilot { position: relative; height: 56px; display: flex; justify-content: center; }
.pre-tag { position: absolute; right: 4px; bottom: 0; width: 45px; height: 18px; border-radius: 4px; background: #f5bd00; color: #111; font: 700 15px/18px "Open Sans", sans-serif; text-align: center; }
```
